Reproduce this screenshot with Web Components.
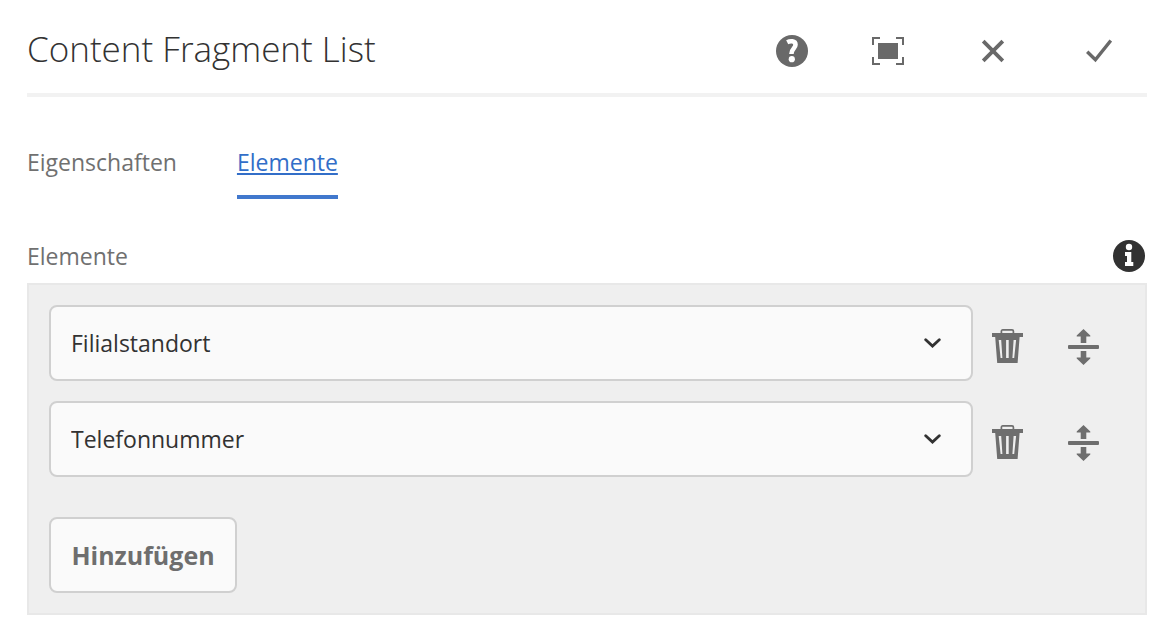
<!DOCTYPE html>
<html lang="de">
<head>
<meta charset="utf-8">
<meta name="viewport" content="width=device-width, initial-scale=1">
<title>Content Fragment List</title>
<style>
  body {
    margin: 0;
    background: #fff;
    font-family: "Open Sans", "Noto Sans", sans-serif;
    font-size: 23px;
    line-height: 32px;
    color: #323232;
  }
</style>
</head>
<body>
<component-dialog>
  <dialog-header slot="header">
    Content Fragment List
    <icon-button slot="tools" icon="help" label="Hilfe"></icon-button>
    <icon-button slot="tools" icon="fullscreen" label="Vollbild"></icon-button>
    <icon-button slot="actions" icon="close" label="Abbrechen"></icon-button>
    <icon-button slot="actions" icon="check" label="Fertig"></icon-button>
  </dialog-header>
  <tab-bar slot="tabs">
    <tab-link href="#eigenschaften">Eigenschaften</tab-link>
    <tab-link href="#elemente" selected>Elemente</tab-link>
  </tab-bar>
  <multi-field label="Elemente" add-label="Hinzufügen">
    <field-row value="Filialstandort"></field-row>
    <field-row value="Telefonnummer"></field-row>
  </multi-field>
</component-dialog>

<script>
const ICONS = {
  help: `<svg width="32" height="32" viewBox="0 0 32 32"><circle cx="16" cy="16" r="16" fill="currentColor"/>
    <path d="M11.2 7.2C14 5.8 19.5 5.4 19.5 9.8C19.5 13.6 15.3 13.6 15.4 19" fill="none" stroke="#fff" stroke-width="4.6"/>
    <circle cx="15.8" cy="24.2" r="3.1" fill="#fff"/></svg>`,
  fullscreen: `<svg width="32" height="28" viewBox="0 0 32 28"><path d="M1 8V1H8M24 1H31V8M31 20V27H24M8 27H1V20" fill="none" stroke="currentColor" stroke-width="2"/>
    <rect x="6" y="6" width="20" height="16" fill="currentColor"/></svg>`,
  close: `<svg width="24" height="24" viewBox="0 0 24 24"><path d="M2.2 2.2L21.8 21.8M21.8 2.2L2.2 21.8" stroke="currentColor" stroke-width="3.8"/></svg>`,
  check: `<svg width="26" height="24" viewBox="0 0 26 24"><path d="M1.2 12.8L9.4 20.8L24.8 1.6" fill="none" stroke="currentColor" stroke-width="3.4"/></svg>`,
  info: `<svg width="32" height="32" viewBox="0 0 32 32"><circle cx="16" cy="16" r="16" fill="currentColor"/>
    <circle cx="16" cy="7" r="3.2" fill="#fff"/><path d="M12 12H18.3V22H20.3V26H12V22H14V16H12Z" fill="#fff"/></svg>`,
  trash: `<svg width="31" height="36" viewBox="0 0 31 36"><path d="M9.4 5V2.3Q9.4 .9 10.8 .9H20Q21.4 .9 21.4 2.3V5" fill="none" stroke="currentColor" stroke-width="1.7"/>
    <path fill-rule="evenodd" fill="currentColor" d="M0 4H31V8H27.6L25.6 34H5.2L3.2 8H0ZM6.7 11L8.6 29H10.4L9.2 11ZM14.1 11V29H16.7V11ZM24.1 11H21.6L20.4 29H22.2Z"/></svg>`,
  move: `<svg width="31" height="36" viewBox="0 0 31 36"><path fill="currentColor" d="M15.5 0L22.3 6.6V7.6H18.3V14H12.7V7.6H8.7V6.6ZM1 16H30Q31 16 31 17V19Q31 20 30 20H1Q0 20 0 19V17Q0 16 1 16ZM12.7 22H18.3V28.4H22.3V29.4L15.5 36L8.7 29.4V28.4H12.7Z"/></svg>`
};

class BaseElement extends HTMLElement {
  connectedCallback() {
    if (this.shadowRoot) return;
    this.attachShadow({ mode: 'open' }).innerHTML = this.render();
  }
}

customElements.define('component-dialog', class extends BaseElement {
  render() {
    return `<style>
      :host { display: block; padding: 0 27px 21px; }
      main { margin-top: 40px; }
    </style>
    <slot name="header"></slot><slot name="tabs"></slot><main><slot></slot></main>`;
  }
});

customElements.define('dialog-header', class extends BaseElement {
  render() {
    return `<style>
      :host { display: block; border-bottom: 4px solid #f2f2f2; }
      header { display: flex; align-items: flex-start; justify-content: space-between; padding: 9px 0 0; }
      h1 { margin: 0; font-size: 35px; line-height: 80px; font-weight: 300; white-space: nowrap; }
      nav { display: flex; gap: 9px; }
      .tools, .actions { display: flex; }
      .actions { gap: 10px; }
    </style>
    <header><h1><slot></slot></h1>
      <nav aria-label="Aktionen"><div class="tools"><slot name="tools"></slot></div>
      <div class="actions"><slot name="actions"></slot></div></nav></header>`;
  }
});

customElements.define('icon-button', class extends BaseElement {
  render() {
    return `<style>
      :host { display: block; color: #696969; }
      button { display: flex; align-items: center; justify-content: center;
        width: var(--icon-button-width, 96px); height: var(--icon-button-height, 84px);
        padding: 0; border: 0; background: none; color: inherit; cursor: pointer; }
      svg { display: block; }
    </style>
    <button type="button" aria-label="${this.getAttribute('label')}">${ICONS[this.getAttribute('icon')]}</button>`;
  }
});

customElements.define('tab-bar', class extends BaseElement {
  render() {
    return `<style>
      :host { display: block; }
      nav { display: flex; gap: 60px; padding-top: 49px; }
    </style>
    <nav><slot></slot></nav>`;
  }
});

customElements.define('tab-link', class extends BaseElement {
  render() {
    return `<style>
      :host { display: block; }
      a { display: block; padding-bottom: 17px; border-bottom: 4px solid transparent;
        color: #707070; text-decoration: none; }
      :host([selected]) a { color: #326ec8; border-color: #4178cd; text-decoration: underline;
        text-decoration-thickness: 2px; text-underline-offset: 2px; text-decoration-skip-ink: none; }
    </style>
    <a href="${this.getAttribute('href')}"${this.hasAttribute('selected') ? ' aria-current="page"' : ''}><slot></slot></a>`;
  }
});

customElements.define('multi-field', class extends BaseElement {
  render() {
    return `<style>
      :host { display: block; }
      .top { display: flex; align-items: center; justify-content: space-between; padding: 0 2px 10px 0; color: #707070; }
      .info { --icon-button-width: 32px; --icon-button-height: 34px; color: #323232; }
      .panel { border: 2px solid #e8e8e8; background: #efefef; padding: 20px; }
      .rows { display: grid; gap: 20px; margin-bottom: 40px; }
      .add { box-sizing: border-box; min-width: 188px; height: 76px; padding: 0 20px; border: 2px solid #d0d0d0; border-radius: 8px;
        background: #fafafa; color: #6e6e6e; font: inherit; font-size: 25px; font-weight: 700; cursor: pointer; }
    </style>
    <div class="top"><span id="label">${this.getAttribute('label')}</span>
      <icon-button class="info" icon="info" label="Info"></icon-button></div>
    <div class="panel" role="group" aria-labelledby="label">
      <div class="rows"><slot></slot></div>
      <button class="add" type="button">${this.getAttribute('add-label')}</button>
    </div>`;
  }
});

customElements.define('field-row', class extends BaseElement {
  render() {
    const value = this.getAttribute('value');
    return `<style>
      :host { display: flex; padding-right: 8px; }
      .select { position: relative; flex: 1; min-width: 0; }
      select { appearance: none; box-sizing: border-box; display: block; width: 100%; height: 76px;
        padding: 0 64px 0 20px; border: 2px solid #d0d0d0; border-radius: 8px; background: #fafafa;
        color: #323232; font: inherit; }
      .chevron { position: absolute; right: 32px; top: 33px; pointer-events: none; }
      .buttons { display: flex; gap: 8px; padding-top: 8px; --icon-button-width: 68px; --icon-button-height: 68px; }
      icon-button { color: #6e6e6e; }
    </style>
    <div class="select">
      <select aria-label="Element"><option>${value}</option></select>
      <svg class="chevron" width="17" height="10" viewBox="0 0 17 10"><path d="M1.7 1.7L8.5 8.1L15.3 1.7" fill="none" stroke="#323232" stroke-width="2.8" stroke-linecap="round"/></svg>
    </div>
    <div class="buttons">
      <icon-button icon="trash" label="Löschen"></icon-button>
      <icon-button icon="move" label="Verschieben"></icon-button>
    </div>`;
  }
});
</script>
</body>
</html>
